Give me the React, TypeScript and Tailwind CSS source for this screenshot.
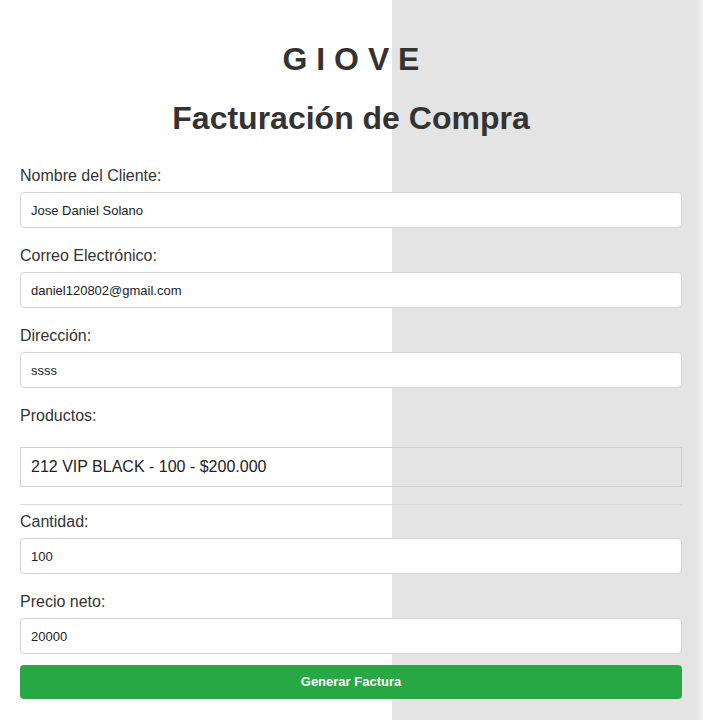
import React from 'react';

const fields = [
  { label: 'Nombre del Cliente:', value: 'Jose Daniel Solano' },
  { label: 'Correo Electrónico:', value: 'daniel120802@gmail.com' },
  { label: 'Dirección:', value: 'ssss' },
];

const Field = ({ label, value }: { label: string; value: string }) => (
  <div className="mb-[19px]">
    <label className="block text-[16px] leading-[18px] text-[#333] mb-[7px]">{label}</label>
    <input
      type="text"
      defaultValue={value}
      className="block w-full h-[36px] px-[10px] bg-white border border-[#d4d4d4] rounded-[4px] text-[13px] text-[#222] focus:outline-none"
    />
  </div>
);

const App = () => {
  return (
    <div
      className="min-h-[720px] w-full font-['Liberation_Sans',Arial,sans-serif] text-[#333] bg-[linear-gradient(to_right,#ffffff_392px,#e4e4e4_392px,#e4e4e4_695px,#efefef_703px)]"
    >
      <div className="pl-[20px] pr-[21px] pt-[41px] pb-[20px]">
        {/* Header */}
        <h1 className="text-center text-[32px] font-bold leading-[37px] mb-[22px]">G I O V E</h1>
        <h2 className="text-center text-[32px] font-bold leading-[37px] mb-[30px]">Facturación de Compra</h2>

        {/* Client fields */}
        {fields.map((f) => (
          <Field key={f.label} label={f.label} value={f.value} />
        ))}

        {/* Products */}
        <div>
          <label className="block text-[16px] leading-[18px] mb-[22px]">Productos:</label>
          <div className="h-[40px] border border-[#d0d0d0] px-[10px] flex items-center text-[16px] text-[#222]">
            212 VIP BLACK - 100 - $200.000
          </div>
        </div>

        <hr className="mt-[17px] mb-[8px] border-t border-[#d9d9d9]" />

        <Field label="Cantidad:" value="100" />
        <div className="-mb-[8px]">
          <Field label="Precio neto:" value="20000" />
        </div>

        <button className="block w-full h-[34px] bg-[#28a745] text-white text-[13px] font-bold rounded-[4px]">
          Generar Factura
        </button>
      </div>
    </div>
  );
};

export default App;
